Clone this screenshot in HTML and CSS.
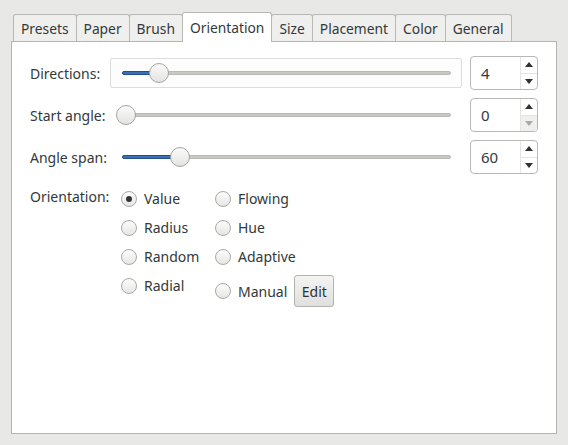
FILE: index.html
```html
<!DOCTYPE html>
<html>
<head>
<meta charset="utf-8">
<link rel="stylesheet" href="styles.css">
</head>
<body>
<div class="window">
  <div class="tabs">
    <div class="tab">Presets</div>
    <div class="tab">Paper</div>
    <div class="tab">Brush</div>
    <div class="tab active">Orientation</div>
    <div class="tab">Size</div>
    <div class="tab">Placement</div>
    <div class="tab">Color</div>
    <div class="tab">General</div>
  </div>
  <div class="panel">
    <div class="row">
      <div class="label">Directions:</div>
      <div class="slider framed">
        <div class="travel" style="--v:0.1034">
          <div class="track"></div>
          <div class="fill"></div>
          <div class="thumb"></div>
        </div>
      </div>
      <div class="spin">
        <div class="val">4</div>
        <div class="arrows">
          <div class="arr up"><span class="tri-up"></span></div>
          <div class="arr down"><span class="tri-down"></span></div>
        </div>
      </div>
    </div>
    <div class="row">
      <div class="label">Start angle:</div>
      <div class="slider">
        <div class="travel" style="--v:0">
          <div class="track"></div>
          <div class="thumb"></div>
        </div>
      </div>
      <div class="spin">
        <div class="val">0</div>
        <div class="arrows">
          <div class="arr up"><span class="tri-up"></span></div>
          <div class="arr down disabled"><span class="tri-down"></span></div>
        </div>
      </div>
    </div>
    <div class="row">
      <div class="label">Angle span:</div>
      <div class="slider">
        <div class="travel" style="--v:0.1667">
          <div class="track"></div>
          <div class="fill"></div>
          <div class="thumb"></div>
        </div>
      </div>
      <div class="spin">
        <div class="val">60</div>
        <div class="arrows">
          <div class="arr up"><span class="tri-up"></span></div>
          <div class="arr down"><span class="tri-down"></span></div>
        </div>
      </div>
    </div>
    <div class="orient">
      <div class="label olabel">Orientation:</div>
      <div class="radcol col1">
        <div class="radio checked"><span class="circle"></span>Value</div>
        <div class="radio"><span class="circle"></span>Radius</div>
        <div class="radio"><span class="circle"></span>Random</div>
        <div class="radio"><span class="circle"></span>Radial</div>
      </div>
      <div class="radcol">
        <div class="radio"><span class="circle"></span>Flowing</div>
        <div class="radio"><span class="circle"></span>Hue</div>
        <div class="radio"><span class="circle"></span>Adaptive</div>
        <div class="radio manual"><span class="circle"></span>Manual<button class="btn">Edit</button></div>
      </div>
    </div>
  </div>
</div>
</body>
</html>
```

FILE: styles.css
```css
html, body {
  margin: 0;
  padding: 0;
  background: #e8e8e7;
  font-family: "Noto Sans", "DejaVu Sans", sans-serif;
  font-size: 14px;
  color: #33393b;
}
.window {
  padding: 12px 0 0 11px;
}
.tabs {
  display: flex;
  align-items: flex-end;
  padding-left: 2px;
  height: 29px;
  position: relative;
  z-index: 2;
}
.tab {
  height: 26px;
  line-height: 27px;
  padding: 0 7px;
  background: #efefed;
  border: 1px solid #b8b8b5;
  border-bottom: none;
  border-radius: 3px 3px 0 0;
  margin-right: -1px;
  font-size: 13.8px;
}
.tab.active {
  background: #ffffff;
  height: 29px;
  line-height: 30px;
  padding: 0 7px;
  margin-bottom: -1px;
  position: relative;
  z-index: 3;
}
.panel {
  width: 546px;
  height: 393px;
  box-sizing: border-box;
  background: #ffffff;
  border: 1px solid #b4b4b1;
  padding: 14px 0 0 18px;
  position: relative;
  z-index: 1;
}
.row {
  display: flex;
  align-items: center;
  height: 34px;
  margin-bottom: 8px;
}
.label {
  width: 80px;
  flex: none;
}
.slider {
  width: 352px;
  height: 30px;
  box-sizing: border-box;
  padding: 0 4px 0 5px;
  display: flex;
  align-items: center;
  border: 1px solid transparent;
  flex: none;
}
.slider.framed {
  border-color: #dcdcd9;
  background: #fdfdfd;
  border-radius: 2px;
}
.travel {
  position: relative;
  flex: 1;
  height: 20px;
}
.track {
  position: absolute;
  left: 6px;
  right: 6px;
  top: 8px;
  height: 4px;
  box-sizing: border-box;
  background: #c8c8c5;
  border: 1px solid #b9b9b6;
  border-radius: 2px;
}
.fill {
  position: absolute;
  left: 6px;
  top: 8px;
  height: 4px;
  width: calc(var(--v) * (100% - 20px) + 6px);
  box-sizing: border-box;
  background: #3c70b2;
  border: 1px solid #234f8a;
  border-radius: 2px;
}
.thumb {
  position: absolute;
  top: 0;
  left: calc(var(--v) * (100% - 20px));
  width: 20px;
  height: 20px;
  box-sizing: border-box;
  border-radius: 50%;
  border: 1px solid #a4a4a1;
  background: linear-gradient(#fbfbfa, #e3e3e1);
}
.spin {
  margin-left: 8px;
  width: 68px;
  height: 34px;
  box-sizing: border-box;
  border: 1px solid #b8b8b5;
  border-radius: 4px;
  background: #fff;
  display: flex;
  overflow: hidden;
  flex: none;
}
.val {
  flex: 1;
  padding-left: 10px;
  line-height: 32px;
  font-size: 15px;
}
.arrows {
  width: 16px;
  border-left: 1px solid #e4e4e2;
  display: flex;
  flex-direction: column;
}
.arr {
  flex: 1;
  display: flex;
  align-items: center;
  justify-content: center;
}
.arr.up {
  border-bottom: 1px solid #e4e4e2;
}
.arr.disabled {
  background: #efefee;
}
.tri-up {
  width: 0;
  height: 0;
  border-left: 4px solid transparent;
  border-right: 4px solid transparent;
  border-bottom: 5px solid #2e3436;
}
.tri-down {
  width: 0;
  height: 0;
  border-left: 4px solid transparent;
  border-right: 4px solid transparent;
  border-top: 5px solid #2e3436;
}
.disabled .tri-down {
  border-top-color: #a9a9a7;
}
.orient {
  display: flex;
  margin-top: 10px;
}
.olabel {
  line-height: 25px;
}
.radcol {
  display: flex;
  flex-direction: column;
}
.col1 {
  margin-left: 11px;
  width: 94px;
}
.radio {
  display: flex;
  align-items: center;
  height: 29px;
}
.circle {
  width: 16px;
  height: 16px;
  box-sizing: border-box;
  border-radius: 50%;
  border: 1px solid #a9a9a6;
  background: linear-gradient(#fcfcfb, #e6e6e4);
  margin-right: 7px;
  display: flex;
  align-items: center;
  justify-content: center;
}
.checked .circle::after {
  content: "";
  width: 6px;
  height: 6px;
  border-radius: 50%;
  background: #2e3436;
}
.radio.manual {
  height: 32px;
  margin-top: 4px;
}
.btn {
  margin-left: 7px;
  width: 40px;
  height: 32px;
  box-sizing: border-box;
  border: 1px solid #b2b2af;
  border-radius: 3px;
  background: linear-gradient(#f4f4f3, #dfdfdd);
  font-family: inherit;
  font-size: 14px;
  color: #2e3436;
  padding: 0;
}
```
